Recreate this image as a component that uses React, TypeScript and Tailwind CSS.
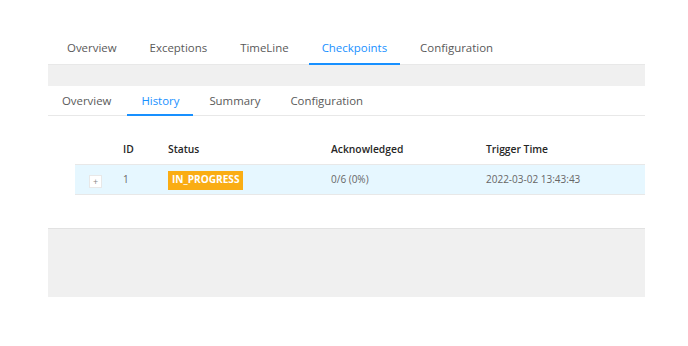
import React from "react";

const topTabs = ["Overview", "Exceptions", "TimeLine", "Checkpoints", "Configuration"];
const subTabs = ["Overview", "History", "Summary", "Configuration"];

export default function App() {
  return (
    <div
      className="w-[688px] h-[346px] bg-white overflow-hidden pt-[31px]"
      style={{ fontFamily: '"Open Sans", "Noto Sans", sans-serif' }}
    >
      <div className="ml-[48px] w-[597px]">
        {/* top tabs */}
        <div className="flex h-[34px] pl-[6px] gap-[7px] border-b border-[#e8e8e8]">
          {topTabs.map((t) => {
            const active = t === "Checkpoints";
            return (
              <div
                key={t}
                className={
                  active
                    ? "relative flex items-center px-[13px] text-[11.45px] text-[#1890ff]"
                    : "relative flex items-center px-[13px] text-[11.45px] text-[#595959]"
                }
              >
                {t}
                {active && <div className="absolute left-0 right-0 bottom-[-1px] h-[2px] bg-[#1890ff]" />}
              </div>
            );
          })}
        </div>
        {/* grey band */}
        <div className="h-[21px] bg-[#f0f0f0]" />
        {/* sub tabs */}
        <div className="flex h-[30px] gap-[2px] border-b border-[#e8e8e8]">
          {subTabs.map((t) => {
            const active = t === "History";
            return (
              <div
                key={t}
                className={
                  active
                    ? "relative flex items-center px-[14px] text-[11.4px] text-[#1890ff]"
                    : "relative flex items-center px-[14px] text-[11.4px] text-[#595959]"
                }
              >
                {t}
                {active && <div className="absolute left-0 right-0 bottom-[-1px] h-[2px] bg-[#1890ff]" />}
              </div>
            );
          })}
        </div>

        {/* table */}
        <div className="ml-[27px] mt-[20px]">
          <div className="grid grid-cols-[40px_45px_163px_155px_1fr] h-[29px] items-center border-b border-[#e8e8e8] text-[10.3px] font-semibold text-[#262626]">
            <div />
            <div className="px-2">ID</div>
            <div className="px-2">Status</div>
            <div className="px-2">Acknowledged</div>
            <div className="px-2">Trigger Time</div>
          </div>
          <div className="grid grid-cols-[40px_45px_163px_155px_1fr] h-[30px] items-center border-b border-[#e8e8e8] bg-[#e6f7ff] text-[10px] text-[#666666]">
            <div className="pl-[14px] pt-[3px]">
              <div className="w-[13px] h-[13px] bg-white border border-[#e8e8e8] flex items-center justify-center text-[9px] leading-none text-[#888]">
                +
              </div>
            </div>
            <div className="px-2">1</div>
            <div className="px-2 pt-[1px]">
              <span className="inline-flex items-center h-[19px] px-[4px] bg-[#faad14] text-white font-bold text-[10.1px]">
                IN_PROGRESS
              </span>
            </div>
            <div className="px-2">0/6 (0%)</div>
            <div className="px-2">2022-03-02 13:43:43</div>
          </div>
        </div>

        {/* bottom grey band */}
        <div className="mt-[33px] h-[69px] bg-[#f0f0f0] border-t border-[#e2e2e2]" />
      </div>
    </div>
  );
}
